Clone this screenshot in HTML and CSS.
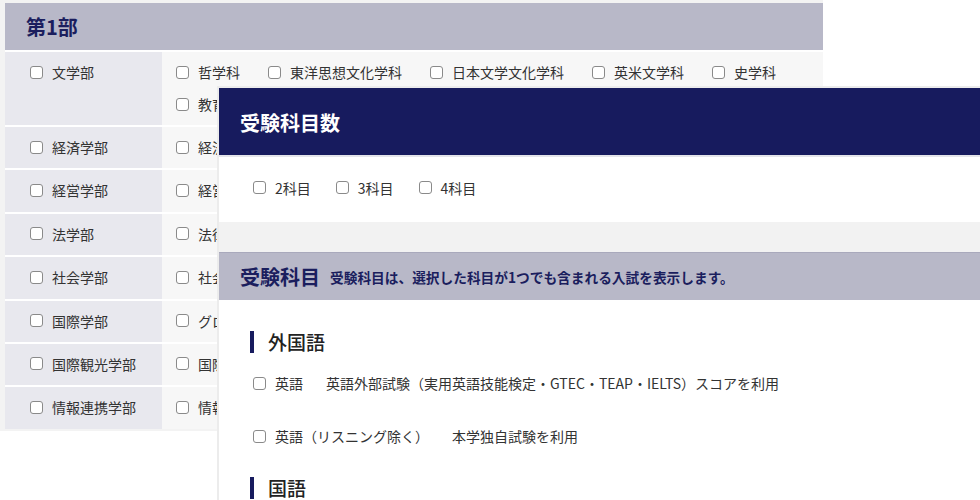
FILE: index.html
```html
<!DOCTYPE html>
<html>
<head>
  <title>学部・受験科目検索</title>
  <link rel="stylesheet" href="styles.css">
</head>
<body>

<div class="stage">

  <div class="faculty">
    <h2 class="faculty-head">第1部</h2>
    <div class="faculty-grid">
      <div class="dept"><label><input type="checkbox">文学部</label></div>
      <div class="majors">
        <label><input type="checkbox">哲学科</label>
        <label><input type="checkbox">東洋思想文化学科</label>
        <label><input type="checkbox">日本文学文化学科</label>
        <label><input type="checkbox">英米文学科</label>
        <label><input type="checkbox">史学科</label>
        <label><input type="checkbox">教育学科</label>
      </div>

      <div class="dept"><label><input type="checkbox">経済学部</label></div>
      <div class="majors"><label><input type="checkbox">経済学科</label></div>

      <div class="dept"><label><input type="checkbox">経営学部</label></div>
      <div class="majors"><label><input type="checkbox">経営学科</label></div>

      <div class="dept"><label><input type="checkbox">法学部</label></div>
      <div class="majors"><label><input type="checkbox">法律学科</label></div>

      <div class="dept"><label><input type="checkbox">社会学部</label></div>
      <div class="majors"><label><input type="checkbox">社会学科</label></div>

      <div class="dept"><label><input type="checkbox">国際学部</label></div>
      <div class="majors"><label><input type="checkbox">グローバル・イノベーション学科</label></div>

      <div class="dept"><label><input type="checkbox">国際観光学部</label></div>
      <div class="majors"><label><input type="checkbox">国際観光学科</label></div>

      <div class="dept"><label><input type="checkbox">情報連携学部</label></div>
      <div class="majors"><label><input type="checkbox">情報連携学科</label></div>
    </div>
  </div>

  <div class="subjects">
    <h2 class="count-head">受験科目数</h2>
    <div class="count-body">
      <label><input type="checkbox">2科目</label>
      <label><input type="checkbox">3科目</label>
      <label><input type="checkbox">4科目</label>
    </div>
    <div class="spacer"></div>
    <div class="subject-head">
      <h2>受験科目</h2>
      <span>受験科目は、選択した科目が1つでも含まれる入試を表示します。</span>
    </div>
    <div class="subject-body">
      <h3>外国語</h3>
      <div class="item"><label><input type="checkbox">英語</label><span class="note">英語外部試験（実用英語技能検定・GTEC・TEAP・IELTS）スコアを利用</span></div>
      <div class="item"><label><input type="checkbox">英語（リスニング除く）</label><span class="note">本学独自試験を利用</span></div>
      <h3>国語</h3>
    </div>
  </div>

</div>

</body>
</html>
```

FILE: styles.css
```css
body {
  margin: 0;
  background-color: #fff;
  font-family: "Noto Sans CJK JP", "Noto Sans", sans-serif;
  color: #333;
  font-size: 14px;
  overflow: hidden;
}

.stage {
  position: relative;
  width: 980px;
  height: 500px;
  overflow: hidden;
}

label {
  display: inline-flex;
  align-items: center;
  white-space: nowrap;
}

input[type="checkbox"] {
  appearance: none;
  width: 13px;
  height: 13px;
  margin: 0 9px 0 0;
  border: 1.5px solid #8a8a8a;
  border-radius: 3px;
  background-color: #fff;
  box-sizing: border-box;
}

/* back panel */

.faculty {
  width: 818px;
  padding: 3px 0 2px 5px;
  background-color: #f3f3f3;
}

.faculty-head {
  margin: 0;
  height: 47px;
  line-height: 47px;
  padding-left: 21px;
  font-size: 20px;
  font-weight: bold;
  color: #1b1e5e;
  background-color: #b8b8c8;
}

.faculty-grid {
  display: grid;
  grid-template-columns: 157px 1fr;
  grid-auto-rows: minmax(41.4px, auto);
  row-gap: 2px;
  padding-top: 2px;
  background-color: #fff;
}

.dept {
  background-color: #e8e8ee;
  padding: 4px 0 0 25px;
}

.majors {
  background-color: #f7f7f7;
  padding: 4px 0 5px 14px;
  overflow: hidden;
  display: flex;
  flex-wrap: wrap;
  column-gap: 28px;
}

.majors label,
.dept label {
  height: 32px;
}

/* front panel */

.subjects {
  position: absolute;
  left: 217px;
  top: 86px;
  width: 800px;
  height: 440px;
  border: 2px solid #ececec;
  border-right: none;
  background-color: #fff;
}

.count-head {
  margin: 0;
  height: 65px;
  line-height: 65px;
  padding: 2px 0 0 21px;
  font-size: 20px;
  font-weight: bold;
  color: #fff;
  background-color: #171b5e;
  border-bottom: 2px solid #e4e4ea;
}

.count-body {
  height: 61px;
  display: flex;
  align-items: center;
  gap: 25px;
  padding: 0 0 4px 34px;
}

.spacer {
  height: 30px;
  background-color: #f2f2f2;
}

.subject-head {
  height: 47px;
  display: flex;
  align-items: center;
  padding-left: 21px;
  background-color: #b8b8c8;
  border-top: 1px solid #a9a9bc;
  color: #1b1e5e;
}

.subject-head h2 {
  margin: 0 10px 0 0;
  font-size: 20px;
  font-weight: bold;
}

.subject-head span {
  font-size: 13.7px;
  font-weight: bold;
}

.subject-body {
  padding: 31px 0 0 34px;
}

.subject-body h3 {
  margin: 0 0 0 -3px;
  border-left: 4px solid #171b5e;
  padding-left: 14px;
  height: 22px;
  line-height: 22px;
  font-size: 19px;
  font-weight: 500;
  color: #222;
}

.item {
  display: flex;
  align-items: center;
  height: 22px;
  margin: 19px 0 0;
}

.item + .item {
  margin-top: 31px;
  margin-bottom: 30px;
}

.note {
  margin-left: 23px;
}
```
